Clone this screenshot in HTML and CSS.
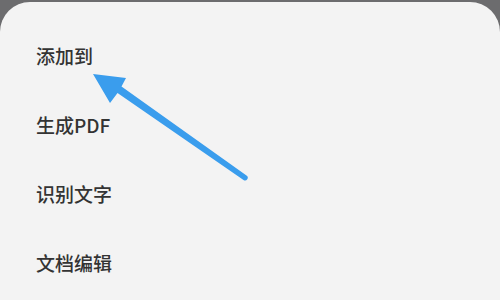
FILE: index.html
```html
<!DOCTYPE html>
<html>
  <head>
    <title>菜单</title>
    <meta name="viewport" content="width=device-width, initial-scale=1.0">
    <link rel="stylesheet" href="styles.css">
  </head>
  <body>
    <main class="sheet">
      <ul class="menu">
        <li>添加到</li>
        <li>生成PDF</li>
        <li>识别文字</li>
        <li>文档编辑</li>
      </ul>
      <svg class="arrow" width="500" height="300" viewBox="0 0 500 300">
        <path d="M93 74 L126 78 L121.5 86.5 L246.5 175.5 A2.3 2.3 0 0 1 243.5 180 L117.5 93 L110 103 Z" fill="#3a9ded"/>
      </svg>
    </main>
  </body>
</html>
```
FILE: styles.css
```css
* {
  margin: 0;
  padding: 0;
  box-sizing: border-box;
}
html,
body {
  width: 100%;
  height: 100%;
}
body {
  background: #6c6c6e;
  padding-top: 2px;
  overflow: hidden;
}
.sheet {
  position: relative;
  height: 100%;
  background: #f3f3f3;
  border-radius: 30px 30px 0 0;
  padding: 19px 36px 0;
}
.menu {
  list-style: none;
  display: flex;
  flex-direction: column;
}
.menu li {
  height: 69px;
  display: flex;
  align-items: center;
  font-family: "Noto Sans CJK SC", "Noto Sans", sans-serif;
  font-size: 19px;
  font-weight: 500;
  color: #333;
}
.arrow {
  position: absolute;
  left: 0;
  top: -2px;
}
```
